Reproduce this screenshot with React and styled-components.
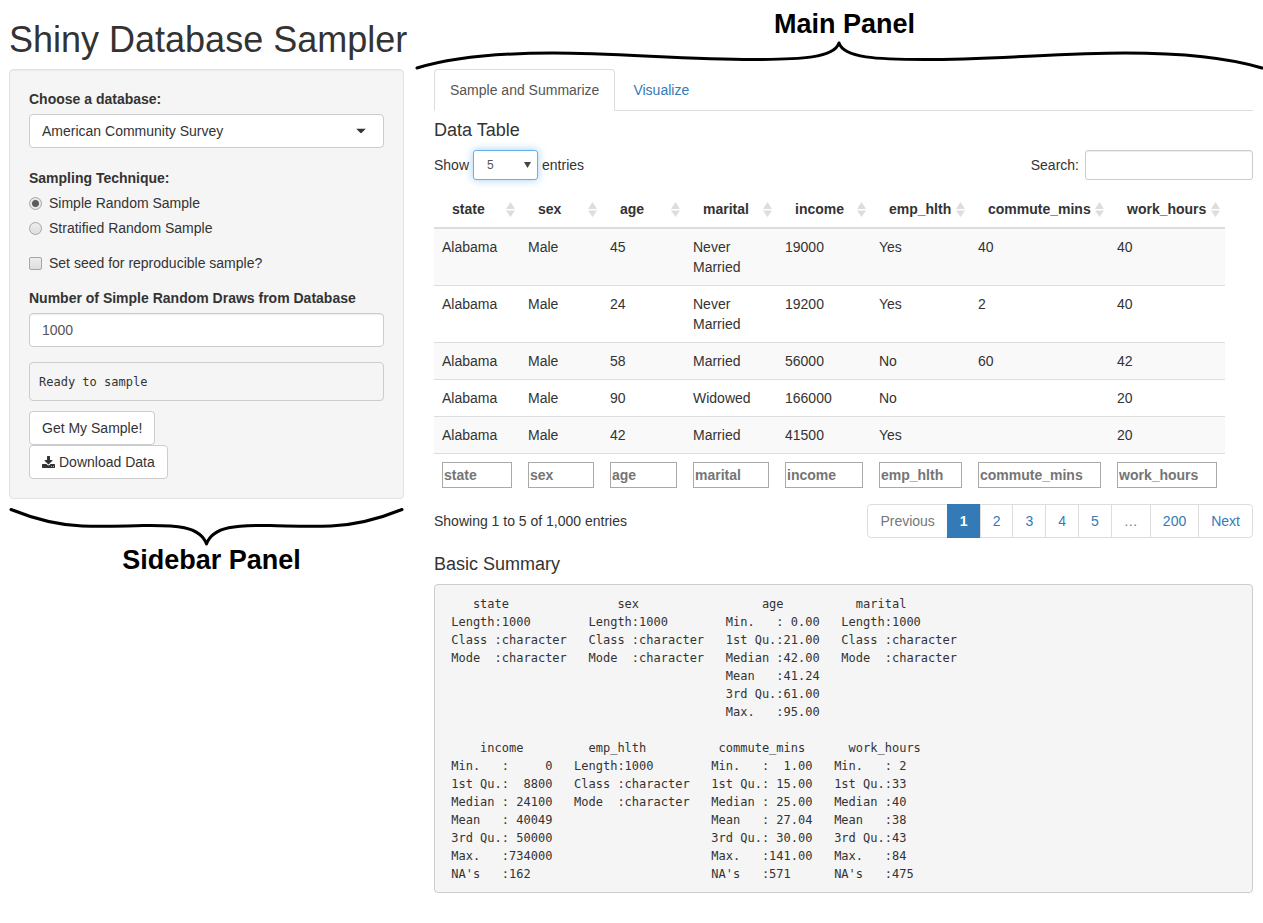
import React, { useState } from 'react';
import styled, { createGlobalStyle } from 'styled-components';

const GlobalStyle = createGlobalStyle`
  *, *::before, *::after { box-sizing: border-box; }
  body {
    margin: 0;
    background: #fff;
    color: #333;
    font-family: "Liberation Sans", Arial, sans-serif;
    font-size: 14px;
    line-height: 20px;
  }
  button, input, select { font: inherit; color: inherit; margin: 0; }
`;

const Page = styled.div`
  display: grid;
  grid-template-columns: minmax(0, 395fr) minmax(0, 819fr);
  column-gap: 30px;
  align-items: start;
  padding: 0 10px 30px 9px;
`;

const Title = styled.h1`
  margin: 0;
  padding: 20px 0 10px;
  font-size: 36px;
  font-weight: 400;
  line-height: 39px;
  white-space: nowrap;
`;

const Annotation = styled.div`
  display: flex;
  flex-direction: column;
  margin: ${(p) => (p.$wide ? '9px -10px 0 -18px' : '9px 0 0')};
`;

const AnnotationLabel = styled.strong`
  padding-left: 10px;
  color: #000;
  font-size: 27px;
  line-height: 31px;
  text-align: center;
`;

const Brace = styled.svg`
  display: block;
  width: 100%;
  height: ${(p) => p.$height}px;
  overflow: visible;
  fill: none;
  stroke: #000;
  stroke-width: 3;
  stroke-linecap: round;
  stroke-linejoin: round;
`;

const Well = styled.form`
  display: flex;
  flex-direction: column;
  gap: 15px;
  padding: 19px;
  background: #f5f5f5;
  border: 1px solid #e3e3e3;
  border-radius: 4px;
  box-shadow: inset 0 1px 1px rgba(0, 0, 0, 0.05);
`;

const Field = styled.div`
  display: flex;
  flex-direction: column;
  gap: 5px;
  margin-bottom: ${(p) => (p.$spaced ? 5 : 0)}px;
`;

const FieldLabel = styled.label`
  font-weight: 700;
`;

const RadioGroup = styled.fieldset`
  display: flex;
  flex-direction: column;
  gap: 5px;
  min-width: 0;
  margin: 0;
  padding: 0;
  border: 0;
`;

const Legend = styled.legend`
  margin-bottom: 5px;
  padding: 0;
  font-weight: 700;
`;

const Choice = styled.label`
  display: flex;
  align-items: center;
  gap: 7px;
`;

const Tick = styled.input`
  appearance: none;
  flex: none;
  width: 13px;
  height: 13px;
  border: 1px solid #a6a6a6;
  border-radius: ${(p) => (p.type === 'radio' ? '50%' : '2px')};
  background: linear-gradient(#ededed, #dedede);
  &:checked {
    background: radial-gradient(circle, #5a5a5a 3px, #e6e6e6 4px);
  }
`;

const SelectBox = styled.span`
  position: relative;
  display: inline-flex;
`;

const Select = styled.select`
  appearance: none;
  width: 100%;
  height: 34px;
  padding: 0 32px 0 12px;
  background: #fff;
  border: 1px solid #ccc;
  border-radius: 4px;
`;

const LengthSelect = styled(Select)`
  width: 65px;
  height: 30px;
  padding: 0 14px 0 13px;
  color: #555;
  font-size: 12px;
  border-color: #66afe9;
  border-radius: 3px;
  box-shadow: 0 0 8px rgba(102, 175, 233, 0.6);
  outline: none;
`;

const Arrow = styled.svg`
  position: absolute;
  right: ${(p) => p.$right}px;
  top: 50%;
  transform: translateY(-50%);
  pointer-events: none;
`;

const TextInput = styled.input`
  width: 100%;
  height: 34px;
  padding: 6px 12px;
  color: #555;
  background: #fff;
  border: 1px solid #ccc;
  border-radius: 4px;
  box-shadow: inset 0 1px 1px rgba(0, 0, 0, 0.075);
`;

const SearchInput = styled(TextInput)`
  width: 168px;
  height: 30px;
  border-radius: 3px;
`;

const Output = styled.pre`
  margin: 0;
  padding: 10px 9px 9px;
  overflow-x: auto;
  background: #f5f5f5;
  border: 1px solid #ccc;
  border-radius: 4px;
  font-family: "DejaVu Sans Mono", monospace;
  font-size: 12px;
  line-height: 18px;
`;

const Actions = styled.div`
  display: flex;
  flex-direction: column;
  align-items: flex-start;
`;

const SampleStep = styled.div`
  display: flex;
  flex-direction: column;
  gap: 10px;
`;

const Button = styled.button`
  display: inline-flex;
  align-items: center;
  gap: 4px;
  height: 34px;
  padding: 0 12px;
  background: #fff;
  border: 1px solid #ccc;
  border-radius: 4px;
`;

const Tabs = styled.nav`
  display: flex;
  gap: 2px;
  border-bottom: 1px solid #ddd;
`;

const Tab = styled.a`
  margin-bottom: -1px;
  padding: 10px 15px;
  border: 1px solid ${(p) => (p.$active ? '#ddd' : 'transparent')};
  border-bottom-color: ${(p) => (p.$active ? '#fff' : '#ddd')};
  border-radius: 4px 4px 0 0;
  background: ${(p) => (p.$active ? '#fff' : 'transparent')};
  color: ${(p) => (p.$active ? '#555' : '#337ab7')};
  text-decoration: none;
`;

const Heading = styled.h2`
  margin: 10px 0;
  font-size: 18px;
  font-weight: 400;
  line-height: 19px;
`;

const Bar = styled.div`
  display: flex;
  justify-content: space-between;
  align-items: center;
  margin-bottom: ${(p) => p.$below}px;
`;

const ControlLabel = styled.label`
  display: flex;
  align-items: center;
  gap: ${(p) => p.$gap}px;
`;

const Table = styled.table`
  width: calc(100% - 28px);
  margin-bottom: 8px;
  table-layout: fixed;
  border-spacing: 0;
  text-align: left;
`;

const HeadCell = styled.th`
  padding: 0;
  border-bottom: 2px solid #ddd;
`;

const SortButton = styled.button`
  display: flex;
  justify-content: space-between;
  align-items: center;
  width: 100%;
  padding: 8px 5px 8px 18px;
  background: none;
  border: 0;
  font-weight: 700;
`;

const Row = styled.tr`
  &:nth-child(odd) { background: #f9f9f9; }
  &:not(:first-child) > td { border-top: 1px solid #ddd; }
`;

const Cell = styled.td`
  padding: 8px;
  vertical-align: top;
`;

const FootCell = styled.td`
  padding: 8px;
  border-top: 1px solid #ddd;
`;

const FilterInput = styled.input`
  display: block;
  width: 100%;
  height: 26px;
  padding: 1px;
  background: #fff;
  border: 1px solid #a9a9a9;
  font-weight: 700;
  &::placeholder { color: #757575; opacity: 1; }
`;

const Pagination = styled.nav`
  display: flex;
`;

const PageLink = styled.a`
  height: 34px;
  margin-left: -1px;
  padding: 6px 12px;
  border: 1px solid ${(p) => (p.$active ? '#337ab7' : '#ddd')};
  background: ${(p) => (p.$active ? '#337ab7' : '#fff')};
  color: ${(p) => (p.$active ? '#fff' : p.$muted ? '#777' : '#337ab7')};
  font-weight: ${(p) => (p.$active ? 700 : 400)};
  text-decoration: none;
  &:first-child { margin-left: 0; border-radius: 4px 0 0 4px; }
  &:last-child { border-radius: 0 4px 4px 0; }
`;

const columns = [
  ['state', 86],
  ['sex', 82],
  ['age', 83],
  ['marital', 92],
  ['income', 94],
  ['emp_hlth', 99],
  ['commute_mins', 139],
  ['work_hours', 116],
];

const rows = [
  ['Alabama', 'Male', '45', 'Never Married', '19000', 'Yes', '40', '40'],
  ['Alabama', 'Male', '24', 'Never Married', '19200', 'Yes', '2', '40'],
  ['Alabama', 'Male', '58', 'Married', '56000', 'No', '60', '42'],
  ['Alabama', 'Male', '90', 'Widowed', '166000', 'No', '', '20'],
  ['Alabama', 'Male', '42', 'Married', '41500', 'Yes', '', '20'],
];

const pages = ['Previous', '1', '2', '3', '4', '5', '…', '200', 'Next'];

const summary = [
  '    state               sex                 age          marital         ',
  ' Length:1000        Length:1000        Min.   : 0.00   Length:1000       ',
  ' Class :character   Class :character   1st Qu.:21.00   Class :character  ',
  ' Mode  :character   Mode  :character   Median :42.00   Mode  :character  ',
  '                                       Mean   :41.24                     ',
  '                                       3rd Qu.:61.00                     ',
  '                                       Max.   :95.00                     ',
  '                                                                         ',
  '     income         emp_hlth          commute_mins      work_hours  ',
  ' Min.   :     0   Length:1000        Min.   :  1.00   Min.   : 2  ',
  ' 1st Qu.:  8800   Class :character   1st Qu.: 15.00   1st Qu.:33  ',
  ' Median : 24100   Mode  :character   Median : 25.00   Median :40  ',
  ' Mean   : 40049                      Mean   : 27.04   Mean   :38  ',
  ' 3rd Qu.: 50000                      3rd Qu.: 30.00   3rd Qu.:43  ',
  ' Max.   :734000                      Max.   :141.00   Max.   :84  ',
  " NA's   :162                         NA's   :571      NA's   :475  ",
].join('\n');

const DownloadIcon = () => (
  <svg width="13" height="12" viewBox="0 -128 1664 1536" fill="#333" aria-hidden="true">
    <path d="M1280 1216q0-26-19-45t-45-19-45 19-19 45 19 45 45 19 45-19 19-45zm256 0q0-26-19-45t-45-19-45 19-19 45 19 45 45 19 45-19 19-45zm128-224v320q0 40-28 68t-68 28H96q-40 0-68-28t-28-68V992q0-40 28-68t68-28h465l135 136q58 56 136 56t136-56l136-136h464q40 0 68 28t28 68zm-325-569q17 41-14 70L877 941q-18 19-45 19t-45-19L339 493q-31-29-14-70 17-39 59-39h256V-64q0-26 19-45t45-19h256q26 0 45 19t19 45v448h256q42 0 59 39z" />
  </svg>
);

const SortIcon = () => (
  <svg width="9" height="15" viewBox="0 0 9 15" fill="#ddd" aria-hidden="true">
    <path d="M0 7 4.500 0 9 7zM0 8.500h9L4.500 15z" />
  </svg>
);

export default function App() {
  const [technique, setTechnique] = useState('simple');
  const [seed, setSeed] = useState(false);

  return (
    <>
      <GlobalStyle />
      <Page>
        <Title>Shiny Database Sampler</Title>
        <Annotation $wide>
          <AnnotationLabel>Main Panel</AnnotationLabel>
          <Brace $height={29} viewBox="0 0 847 29" preserveAspectRatio="none" aria-hidden="true">
            <path d="M1 28C40 16 90 13 137 13C200 13 270 19.500 337 19.500C385 19.500 418 18 423 3C428 18 461 19.500 509 19.500C576 19.500 646 13 709 13C756 13 806 16 846 28" />
          </Brace>
        </Annotation>

        <aside>
          <Well onSubmit={(e) => e.preventDefault()}>
            <Field $spaced>
              <FieldLabel htmlFor="database">Choose a database:</FieldLabel>
              <SelectBox>
                <Select id="database">
                  <option>American Community Survey</option>
                </Select>
                <Arrow $right={18} width="10" height="5" viewBox="0 0 10 5" fill="#333" aria-hidden="true">
                  <path d="M0 0h10L5 5z" />
                </Arrow>
              </SelectBox>
            </Field>

            <RadioGroup>
              <Legend>Sampling Technique:</Legend>
              <Choice>
                <Tick type="radio" name="technique" checked={technique === 'simple'} onChange={() => setTechnique('simple')} />
                Simple Random Sample
              </Choice>
              <Choice>
                <Tick type="radio" name="technique" checked={technique === 'stratified'} onChange={() => setTechnique('stratified')} />
                Stratified Random Sample
              </Choice>
            </RadioGroup>

            <Choice>
              <Tick type="checkbox" checked={seed} onChange={(e) => setSeed(e.target.checked)} />
              Set seed for reproducible sample?
            </Choice>

            <Field>
              <FieldLabel htmlFor="draws">Number of Simple Random Draws from Database</FieldLabel>
              <TextInput id="draws" type="text" inputMode="numeric" defaultValue="1000" />
            </Field>

            <SampleStep>
              <Output>Ready to sample</Output>
              <Actions>
                <Button type="button">Get My Sample!</Button>
                <Button type="button">
                  <DownloadIcon />
                  Download Data
                </Button>
              </Actions>
            </SampleStep>
          </Well>
          <Annotation>
            <Brace $height={37} viewBox="0 0 395 37" preserveAspectRatio="none" aria-hidden="true">
              <path d="M2 1.500C23 10 49 17 73 18C96 19 111 18 134 17.500C166 17 191 18 197.500 36C204 18 229 17 261 17.500C284 18 299 19 322 18C346 17 372 10 393 1.500" />
            </Brace>
            <AnnotationLabel>Sidebar Panel</AnnotationLabel>
          </Annotation>
        </aside>

        <main>
          <Tabs>
            <Tab href="#summarize" $active>Sample and Summarize</Tab>
            <Tab href="#visualize">Visualize</Tab>
          </Tabs>

          <Heading>Data Table</Heading>
          <Bar $below={11}>
            <ControlLabel $gap={4}>
              Show
              <SelectBox>
                <LengthSelect defaultValue="5">
                  <option>5</option>
                  <option>10</option>
                  <option>25</option>
                </LengthSelect>
                <Arrow $right={7} width="7" height="6" viewBox="0 0 7 6" fill="#444" aria-hidden="true">
                  <path d="M0 0h7L3.500 6z" />
                </Arrow>
              </SelectBox>
              entries
            </ControlLabel>
            <ControlLabel $gap={6}>
              Search:
              <SearchInput type="search" />
            </ControlLabel>
          </Bar>

          <Table>
            <colgroup>
              {columns.map(([name, width]) => (
                <col key={name} width={width} />
              ))}
            </colgroup>
            <thead>
              <tr>
                {columns.map(([name]) => (
                  <HeadCell key={name} scope="col">
                    <SortButton type="button">
                      {name}
                      <SortIcon />
                    </SortButton>
                  </HeadCell>
                ))}
              </tr>
            </thead>
            <tbody>
              {rows.map((row, r) => (
                <Row key={r}>
                  {row.map((value, c) => (
                    <Cell key={c}>{value}</Cell>
                  ))}
                </Row>
              ))}
            </tbody>
            <tfoot>
              <tr>
                {columns.map(([name]) => (
                  <FootCell key={name}>
                    <FilterInput type="text" placeholder={name} aria-label={`Filter ${name}`} />
                  </FootCell>
                ))}
              </tr>
            </tfoot>
          </Table>

          <Bar $below={17}>
            <span>Showing 1 to 5 of 1,000 entries</span>
            <Pagination aria-label="Table pages">
              {pages.map((page) => (
                <PageLink
                  key={page}
                  href="#page"
                  $active={page === '1'}
                  $muted={page === 'Previous' || page === '…'}
                >
                  {page}
                </PageLink>
              ))}
            </Pagination>
          </Bar>

          <Heading>Basic Summary</Heading>
          <Output>{summary}</Output>
        </main>
      </Page>
    </>
  );
}
